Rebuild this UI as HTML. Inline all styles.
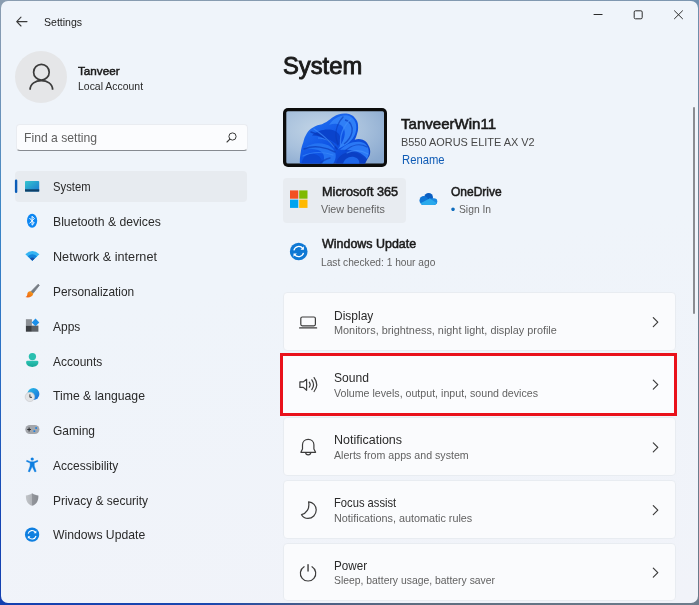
<!DOCTYPE html>
<html lang="en">
<head>
<meta charset="utf-8">
<title>Settings</title>
<style>
*{box-sizing:border-box;margin:0;padding:0}
html,body{width:699px;height:605px;overflow:hidden}
body{background:#6d7d8c;font-family:"Liberation Sans",sans-serif;color:#1b1b1b;position:relative}
#deskL{position:absolute;left:0;top:0;width:8px;height:605px;background:linear-gradient(180deg,#8a9db0 0,#7d97b5 12%,#3b86c6 35%,#2a6fc4 60%,#1546b4 85%,#1440b0 100%)}
#deskB{position:absolute;left:0;top:596px;width:699px;height:9px;background:linear-gradient(90deg,#1440b0 0,#1a48b0 30%,#4a5f86 45%,#5e6e80 60%,#6d7d8c 100%)}
#deskT{position:absolute;left:0;top:0;width:699px;height:8px;background:linear-gradient(90deg,#8a9db0 0,#7e97b0 100%)}
#deskR{position:absolute;left:690px;top:0;width:9px;height:605px;background:linear-gradient(180deg,#7090b0 0,#6d7f92 30%,#6a7a8a 100%)}
#win{position:absolute;left:1px;top:1px;width:697px;height:602px;background:linear-gradient(170deg,#eff4fa 0,#eff4fa 45%,#f1f3f9 100%);border-radius:7px;overflow:hidden}
#c{position:absolute;left:-1px;top:-1px;width:699px;height:605px;will-change:transform}
.t{position:absolute;white-space:nowrap;line-height:1;transform-origin:0 0}
.b{position:absolute}
.card{position:absolute;left:283px;width:393px;background:#fafbfd;border:1px solid #e8ecf1;border-radius:4px}
svg{position:absolute;overflow:visible}
</style>
</head>
<body>
<div id="deskT"></div><div id="deskR"></div><div id="deskL"></div><div id="deskB"></div>
<div id="win"><div id="c">

<!-- title bar -->
<svg style="left:15px;top:15px" width="14" height="14" viewBox="0 0 14 14"><path d="M6 2.200 L1.700 6.600 L6 11 M1.900 6.600 H12" fill="none" stroke="#3a3a3a" stroke-width="1.100" stroke-linecap="round" stroke-linejoin="round"/></svg>
<svg style="left:590px;top:8px" width="100" height="14" viewBox="0 0 100 14"><path d="M3.600 6.500 H12.500" stroke="#2b2b2b" stroke-width="1" fill="none"/><rect x="44.200" y="2.800" width="8" height="8" rx="1.300" fill="none" stroke="#2b2b2b" stroke-width="1"/><path d="M84.200 2.500 L92.800 11 M92.800 2.500 L84.200 11" stroke="#2b2b2b" stroke-width="1" fill="none"/></svg>

<!-- user -->
<div class="b" style="left:15px;top:50.500px;width:52px;height:52px;border-radius:50%;background:#e5e6e8"></div>
<svg style="left:27px;top:60px" width="28" height="32" viewBox="0 0 28 32"><circle cx="14.400" cy="12.200" r="7.800" fill="none" stroke="#3b3b3b" stroke-width="1.700"/><path d="M3.100 29.700 C3.100 17.500 25.600 17.500 25.600 29.700" fill="none" stroke="#3b3b3b" stroke-width="1.700"/></svg>

<!-- search -->
<div class="b" style="left:16px;top:124px;width:231.500px;height:27px;background:#fbfcfe;border:1px solid #e9ecf1;border-bottom:1px solid #868a90;border-radius:4px"></div>
<svg style="left:225px;top:131px" width="13" height="13" viewBox="0 0 13 13"><circle cx="7.500" cy="5.500" r="3.600" fill="none" stroke="#3a3a3a" stroke-width="1"/><path d="M4.900 8.100 L2 11" stroke="#3a3a3a" stroke-width="1.100" stroke-linecap="round"/></svg>

<!-- nav selection -->
<div class="b" style="left:15px;top:170.500px;width:232px;height:31px;background:#e7ebf0;border-radius:4px"></div>
<svg style="left:0;top:0" width="60" height="200" viewBox="0 0 60 200"><rect x="14.900" y="179.500" width="2.400" height="13.400" rx="1.200" fill="#0a5cb8"/></svg>

<svg style="left:0;top:0" width="699" height="605" viewBox="0 0 699 605">
<defs>
<linearGradient id="gSys" x1="0" y1="0" x2="1" y2="1"><stop offset="0" stop-color="#35c6cf"/><stop offset="1" stop-color="#1a78d2"/></linearGradient>
<linearGradient id="gAcc" x1="0" y1="0" x2="0" y2="1"><stop offset="0" stop-color="#2cc4b4"/><stop offset="1" stop-color="#16a596"/></linearGradient>
<linearGradient id="gGlobe" x1="0" y1="0" x2="1" y2="1"><stop offset="0" stop-color="#28c0e8"/><stop offset="1" stop-color="#1a6ad8"/></linearGradient>
<linearGradient id="gShield" x1="0" y1="0" x2="1" y2="0"><stop offset="0" stop-color="#c2c5c9"/><stop offset="0.5" stop-color="#b0b3b8"/><stop offset="0.5" stop-color="#92959b"/><stop offset="1" stop-color="#888b91"/></linearGradient>
<linearGradient id="gBrush" x1="1" y1="0" x2="0" y2="1"><stop offset="0" stop-color="#f6a21a"/><stop offset="1" stop-color="#ee5a12"/></linearGradient>
</defs>
<!-- system -->
<rect x="25" y="181" width="14.200" height="10.600" rx="0.800" fill="url(#gSys)"/>
<rect x="25" y="189.300" width="14.200" height="2.300" fill="#0e3f68"/>
<!-- bluetooth -->
<ellipse cx="32.100" cy="220.750" rx="5.100" ry="7.050" fill="#0c86f2"/>
<path d="M29.700 218.300 L34.300 223 L32.100 225.200 L32.100 216.300 L34.300 218.500 L29.700 223.200" fill="none" stroke="#fff" stroke-width="1" stroke-linejoin="round" stroke-linecap="round"/>
<!-- wifi -->
<path d="M32.350 260.800 L25.300 254.200 Q32.350 247.800 39.400 254.200 Z" fill="#35b4f2"/>
<path d="M32.350 260.800 L27.700 256.300 Q32.350 252.300 37 256.300 Z" fill="#1283dc"/>
<path d="M32.350 260.800 L30 258.500 Q32.350 256.500 34.700 258.500 Z" fill="#1a4fa6"/>
<!-- brush -->
<path d="M38.200 284.200 L39.300 285.300 L32.800 293.600 L30.800 291.800 Z" fill="#747a82" stroke="#747a82" stroke-width="0.800" stroke-linejoin="round"/>
<path d="M30.600 291.300 C28.600 291 27.200 292.600 27.300 294.400 C27.300 295.600 26.600 296.500 25.300 297 C28 298 32.500 297.300 33.300 293.800 Z" fill="url(#gBrush)"/>
<!-- apps -->
<rect x="25.900" y="319.200" width="6" height="6.400" fill="#8c9095"/>
<rect x="25.900" y="325.600" width="6" height="6.100" fill="#3a3d41"/>
<rect x="31.900" y="325.600" width="6.500" height="6.100" fill="#5d6166"/>
<path d="M35.500 318.600 L39.300 322.400 L35.500 326.200 L31.700 322.400 Z" fill="#1b8fea"/>
<!-- accounts -->
<circle cx="32.400" cy="356.600" r="3.650" fill="#2abfb0"/>
<path d="M27.600 360.700 H37 Q38.400 360.700 38.400 362.100 C38.400 368.600 26.100 368.600 26.100 362.100 Q26.100 360.700 27.600 360.700 Z" fill="url(#gAcc)"/>
<!-- time -->
<circle cx="33.400" cy="393.900" r="6" fill="url(#gGlobe)"/>
<circle cx="29.900" cy="396.900" r="4.700" fill="#e3e4e6"/>
<circle cx="29.900" cy="396.900" r="4.700" fill="none" stroke="#c4c6ca" stroke-width="0.600"/>
<path d="M29.900 394.300 V397.300 H32" fill="none" stroke="#2b2b2b" stroke-width="0.900"/>
<!-- gaming -->
<rect x="25.300" y="424.900" width="14.100" height="9.200" rx="4.600" fill="#a3a6ab"/>
<path d="M27.200 429.500 H31 M29.100 427.600 V431.400" stroke="#2e3033" stroke-width="1.100" fill="none"/>
<rect x="35.300" y="427.200" width="1.700" height="1.700" fill="#1b7fe0"/>
<rect x="33.500" y="430.300" width="1.700" height="1.700" fill="#1b7fe0"/>
<!-- accessibility -->
<circle cx="32.200" cy="459" r="1.600" fill="#0f7fe0"/>
<path d="M26.800 460.300 L30.600 461.700 H33.800 L37.600 460.300 L38 461.400 L34.300 463 L34.300 466 L36.200 471.400 L34.800 471.900 L32.200 466.600 L29.600 471.900 L28.200 471.400 L30.100 466 L30.100 463 L26.400 461.400 Z" fill="#0f7fe0" stroke="#0f7fe0" stroke-width="0.400" stroke-linejoin="round"/>
<!-- shield -->
<path d="M32.150 493.300 C34.200 494.800 36.300 495.300 38.400 495.400 C38.600 500.500 36.800 504 32.150 505.800 C27.500 504 25.700 500.500 25.900 495.400 C28 495.300 30.100 494.800 32.150 493.300 Z" fill="url(#gShield)"/>
<!-- windows update -->
<circle cx="32.100" cy="534.650" r="7.150" fill="#0f7fe0"/>
<path d="M28.200 533.700 A4 4 0 0 1 35.400 532.300" fill="none" stroke="#fff" stroke-width="1.100"/>
<path d="M36 536 A4 4 0 0 1 28.800 537.200" fill="none" stroke="#fff" stroke-width="1.100"/>
<path d="M36.300 530.600 V533.200 H33.700 Z" fill="#fff"/>
<path d="M27.900 538.800 V536.200 H30.500 Z" fill="#fff"/>
</svg>


<!-- device -->
<div class="b" style="left:283px;top:108px;width:104px;height:58.500px;background:#0c0c0c;border-radius:5px"></div>
<svg style="left:0;top:0" width="699" height="605" viewBox="0 0 699 605">
<defs>
<radialGradient id="wbg" cx="0.35" cy="0.35" r="0.8"><stop offset="0" stop-color="#c3d5e6"/><stop offset="0.55" stop-color="#a7c0dc"/><stop offset="1" stop-color="#8aa9cf"/></radialGradient>
<linearGradient id="bl1" x1="0" y1="0" x2="1" y2="1"><stop offset="0" stop-color="#2a7af5"/><stop offset="0.5" stop-color="#0f55e6"/><stop offset="1" stop-color="#0a3cc0"/></linearGradient>
<linearGradient id="bl2" x1="0" y1="0" x2="0" y2="1"><stop offset="0" stop-color="#2f80f8"/><stop offset="1" stop-color="#0b45cf"/></linearGradient>
<clipPath id="wclip"><rect x="286.300" y="111.200" width="97.700" height="52.300" rx="1.500"/></clipPath>
</defs>
<g clip-path="url(#wclip)">
<rect x="286" y="111" width="99" height="53" fill="url(#wbg)"/>
<!-- bloom -->
<path d="M300 165 C299.500 160 300.200 155 300.800 152 C301.300 148 302.200 145 303.300 142.200 C304 139 305 136.500 306.500 134 C308 131 310 129 313 127.500 C316 125.500 319 124.800 322 124.200 C325 123 328 121 330.200 119.300 C332.500 117 335.500 115.300 338.400 114.400 C341 113.500 344 113.300 346.500 113.600 C350 114 353 115.500 354.700 117.700 C357 120 358.200 123 358 125.800 C358.300 129 358 131.500 357 134 C356.500 136 355.700 138 354.700 139.700 C357 138.600 360 138.600 362.800 139.700 C365.500 140.800 367.500 143 368.500 145.400 C369.800 147.500 370.300 150 370.200 152 C370.200 154.500 369.200 156.500 367.700 158.500 C366.800 160.500 365.800 162 364.500 165 Z" fill="url(#bl1)"/>
<path d="M329 125 C333 118 342 114 348 115.500 C355 117.500 358 125 355.500 133 C353 141 345 146 338 149 C344 141 347 133 343 127 C340 123 334 123 329 125 Z" fill="#2f7ff7"/>
<path d="M312 135.500 C318 130 328 128 335 131 C341 134 342 140 338 146 C333 140 323 136 312 135.500 Z" fill="#0a43cc"/>
<path d="M305 148 C312 142 324 142 331 147 C337 151.500 337 158 333 164 L322 164 C326 158 324 152 318 150 C313 148.500 308 149 305 148 Z" fill="#2473f2"/>
<path d="M301.500 164 C302 157 308 153 314 154 C320 155 323 160 321 164 Z" fill="#0c48d2"/>
<path d="M340 150 C346 143 357 139.500 364 143 C369 146 370.500 153 367 159 C362 152 352 149 340 150 Z" fill="#2a78f5"/>
<path d="M336 164 C337 157 343 152 351 152 C359 152 365 157 365 164 Z" fill="#0a3fc4"/>
<path d="M343 164 C344 159 349 156 354 157 C358 158 360 161 359 164 Z" fill="#1d66ea"/>
<path d="M345 120 C350 121 353 126 352 132 C351 137 348 141 344 144" fill="none" stroke="#0a3dc0" stroke-width="1.300" opacity="0.700"/>
<path d="M318 138 C324 138 331 141 335 146" fill="none" stroke="#3a8bfb" stroke-width="1" opacity="0.800"/>
<g fill="none" stroke-linecap="round">
<path d="M337 149 C331 141 322 135 311 132" stroke="#0a3ab8" stroke-width="1.600" opacity="0.750"/>
<path d="M334 147 C328 139 320 133 314 129" stroke="#3f8dfb" stroke-width="1.200" opacity="0.700"/>
<path d="M335 152 C326 147 314 145 304 149" stroke="#0a3ab8" stroke-width="1.500" opacity="0.700"/>
<path d="M333 155 C325 152 313 151 303 156" stroke="#3f8dfb" stroke-width="1.200" opacity="0.600"/>
<path d="M341 146 C339 137 343 126 351 119" stroke="#3f8dfb" stroke-width="1.300" opacity="0.700"/>
<path d="M338 144 C334 135 336 125 343 117" stroke="#0a3ab8" stroke-width="1.400" opacity="0.600"/>
<path d="M346 150 C352 145 360 143 367 147" stroke="#0a3ab8" stroke-width="1.400" opacity="0.600"/>
<path d="M347 153 C353 150 361 150 368 154" stroke="#4a95fc" stroke-width="1.100" opacity="0.600"/>
<path d="M330 158 C326 159 322 161 320 164" stroke="#0a3ab8" stroke-width="1.400" opacity="0.600"/>
</g>
</g>
</svg>

<!-- tiles -->
<div class="b" style="left:283px;top:177.500px;width:122.500px;height:45px;background:#e8ecf1;border-radius:4px"></div>
<svg style="left:0;top:0" width="699" height="605" viewBox="0 0 699 605">
<!-- ms logo -->
<rect x="290" y="190.400" width="8.300" height="8.300" fill="#f25022"/>
<rect x="299.200" y="190.400" width="8.300" height="8.300" fill="#7fba00"/>
<rect x="290" y="199.600" width="8.300" height="8.300" fill="#00a4ef"/>
<rect x="299.200" y="199.600" width="8.300" height="8.300" fill="#ffb900"/>
<!-- onedrive -->
<circle cx="428.600" cy="197.400" r="4.400" fill="#0a5ec2"/>
<circle cx="423.800" cy="200.400" r="4.300" fill="#0f76d6"/>
<circle cx="433.900" cy="201.600" r="3.300" fill="#1a8ae2"/>
<path d="M421.800 204.900 H434.200 A3.300 3.300 0 0 0 436.300 199.300 L429.800 198.300 L421 203.700 Z" fill="#1a8ae2"/>
<path d="M420.500 203.200 L429.700 198.400 L436.700 203 A3.300 3.300 0 0 1 434 204.900 H423 A4.300 4.300 0 0 1 420.500 203.200 Z" fill="#29a9ec"/>
<!-- windows update -->
<circle cx="298.700" cy="251.500" r="8.800" fill="#0f78d4"/>
<path d="M293.900 250.300 A5 5 0 0 1 302.800 248.500" fill="none" stroke="#fff" stroke-width="1.300"/>
<path d="M303.500 252.900 A5 5 0 0 1 294.600 254.600" fill="none" stroke="#fff" stroke-width="1.300"/>
<path d="M303.900 246.300 V249.700 H300.500 Z" fill="#fff"/>
<path d="M293.500 256.800 V253.400 H296.900 Z" fill="#fff"/>
</svg>


<!-- cards -->
<div class="card" style="top:292px;height:59px"></div>
<div class="card" style="top:417px;height:59px"></div>
<div class="card" style="top:480px;height:59px"></div>
<div class="card" style="top:543px;height:58px"></div>
<div class="b" style="left:280px;top:353px;width:397px;height:63px;border:3px solid #e9111b;background:#fbfcfe"></div>
<svg style="left:0;top:0" width="699" height="605" viewBox="0 0 699 605" fill="none" stroke="#3c3c3c" stroke-width="1.200" stroke-linecap="round" stroke-linejoin="round">
<rect x="300.800" y="317" width="14.600" height="8.800" rx="1.500"/>
<path d="M299.600 327.900 H316.600"/>
<path d="M299.900 381.900 H303.300 L306.600 379.300 V390.300 L303.300 387.400 H299.900 Z"/>
<path d="M309.300 382.200 Q311.100 384.700 309.300 387.200"/>
<path d="M311.800 379.800 Q315.200 384.700 311.800 389.600"/>
<path d="M314.100 377.600 Q319.300 384.700 314.100 391.500"/>
<path d="M302.500 449 V444.800 C302.500 441.500 305 439.300 308.200 439.300 C311.400 439.300 313.900 441.500 313.900 444.800 V449 L315.600 452.300 H300.900 Z"/>
<path d="M305.600 452.500 C305.800 455.600 310.600 455.600 310.800 452.500"/>
<path d="M308.600 501.800 C313 502.200 316.200 505.700 316.200 510 C316.200 514.700 312.500 518.400 308 518.400 C305.200 518.400 302.800 517 301.500 514.700 C306.300 513.400 309.900 508.800 308.600 501.800 Z"/>
<path d="M312.02 566.70 A7.7 7.7 0 1 1 304.08 566.70"/>
<path d="M308.050 564.700 V571" stroke-width="1.400"/>
<path d="M653.300 317.6 L657.800 322.1 L653.300 326.6"/>
<path d="M653.300 380.2 L657.800 384.7 L653.300 389.2"/>
<path d="M653.300 442.9 L657.800 447.4 L653.300 451.9"/>
<path d="M653.300 505.6 L657.800 510.1 L653.300 514.6"/>
<path d="M653.300 568.2 L657.800 572.7 L653.300 577.2"/>
</svg>

<!-- scrollbar -->
<div class="b" style="left:693px;top:107px;width:2px;height:207px;background:#8a8c92;border-radius:1px"></div>

<span class="t" style="left:44.00px;top:18.00px;font-size:10.2px;font-weight:normal;color:#222;transform:scaleX(1.0350)">Settings</span>
<span class="t" style="left:77.75px;top:66.00px;font-size:11.8px;font-weight:normal;color:#1a1a1a;transform:scaleX(0.9897);-webkit-text-stroke:0.5px #1a1a1a">Tanveer</span>
<span class="t" style="left:77.50px;top:82.00px;font-size:10.3px;font-weight:normal;color:#2a2a2a;transform:scaleX(1.0151)">Local Account</span>
<span class="t" style="left:24.00px;top:133.00px;font-size:11.9px;font-weight:normal;color:#5f5f5f;transform:scaleX(1.0230)">Find a setting</span>
<span class="t" style="left:53.15px;top:182.00px;font-size:11.9px;font-weight:normal;color:#2a2a2a;transform:scaleX(0.9462)">System</span>
<span class="t" style="left:53.15px;top:217.00px;font-size:11.9px;font-weight:normal;color:#2a2a2a;transform:scaleX(1.0256)">Bluetooth &amp; devices</span>
<span class="t" style="left:53.15px;top:252.00px;font-size:11.9px;font-weight:normal;color:#2a2a2a;transform:scaleX(1.0624)">Network &amp; internet</span>
<span class="t" style="left:53.15px;top:287.00px;font-size:11.9px;font-weight:normal;color:#2a2a2a;transform:scaleX(0.9989)">Personalization</span>
<span class="t" style="left:52.65px;top:322.00px;font-size:11.9px;font-weight:normal;color:#2a2a2a;transform:scaleX(1.0071)">Apps</span>
<span class="t" style="left:52.65px;top:357.00px;font-size:11.9px;font-weight:normal;color:#2a2a2a;transform:scaleX(1.0079)">Accounts</span>
<span class="t" style="left:52.90px;top:391.00px;font-size:11.9px;font-weight:normal;color:#2a2a2a;transform:scaleX(1.0279)">Time &amp; language</span>
<span class="t" style="left:52.90px;top:426.00px;font-size:11.9px;font-weight:normal;color:#2a2a2a;transform:scaleX(1.0080)">Gaming</span>
<span class="t" style="left:52.65px;top:461.00px;font-size:11.9px;font-weight:normal;color:#2a2a2a;transform:scaleX(1.0084)">Accessibility</span>
<span class="t" style="left:52.65px;top:496.00px;font-size:11.9px;font-weight:normal;color:#2a2a2a;transform:scaleX(1.0059)">Privacy &amp; security</span>
<span class="t" style="left:52.65px;top:530.00px;font-size:11.9px;font-weight:normal;color:#2a2a2a;transform:scaleX(1.0258)">Windows Update</span>
<span class="t" style="left:282.64px;top:55.00px;font-size:23.4px;font-weight:normal;color:#1a1a1a;transform:scaleX(1.0151);-webkit-text-stroke:0.9px #1a1a1a">System</span>
<span class="t" style="left:401.20px;top:116.00px;font-size:15px;font-weight:normal;color:#1a1a1a;transform:scaleX(1.0034);-webkit-text-stroke:0.6px #1a1a1a">TanveerWin11</span>
<span class="t" style="left:401.15px;top:137.00px;font-size:11.5px;font-weight:normal;color:#484848;transform:scaleX(0.9502)">B550 AORUS ELITE AX V2</span>
<span class="t" style="left:401.90px;top:155.00px;font-size:11.9px;font-weight:normal;color:#0f5bb5;transform:scaleX(0.9464)">Rename</span>
<span class="t" style="left:321.87px;top:187.00px;font-size:11.9px;font-weight:normal;color:#1a1a1a;transform:scaleX(1.0670);-webkit-text-stroke:0.5px #1a1a1a">Microsoft 365</span>
<span class="t" style="left:320.65px;top:205.00px;font-size:10.3px;font-weight:normal;color:#626262;transform:scaleX(1.0442)">View benefits</span>
<span class="t" style="left:450.90px;top:187.00px;font-size:11.9px;font-weight:normal;color:#1a1a1a;transform:scaleX(1.0096);-webkit-text-stroke:0.5px #1a1a1a">OneDrive</span>
<span class="t" style="left:458.90px;top:205.00px;font-size:10.3px;font-weight:normal;color:#626262;transform:scaleX(1.0006)">Sign In</span>
<span class="t" style="left:321.86px;top:239.00px;font-size:11.9px;font-weight:normal;color:#1a1a1a;transform:scaleX(1.0477);-webkit-text-stroke:0.5px #1a1a1a">Windows Update</span>
<span class="t" style="left:321.15px;top:258.00px;font-size:10.3px;font-weight:normal;color:#626262;transform:scaleX(0.9887)">Last checked: 1 hour ago</span>
<span class="t" style="left:333.65px;top:311.00px;font-size:11.9px;font-weight:normal;color:#2a2a2a;transform:scaleX(1.0079)">Display</span>
<span class="t" style="left:333.90px;top:326.00px;font-size:10.3px;font-weight:normal;color:#626262;transform:scaleX(1.0550)">Monitors, brightness, night light, display profile</span>
<span class="t" style="left:333.90px;top:373.00px;font-size:11.9px;font-weight:normal;color:#2a2a2a;transform:scaleX(1.0172)">Sound</span>
<span class="t" style="left:333.90px;top:389.00px;font-size:10.3px;font-weight:normal;color:#626262;transform:scaleX(1.0330)">Volume levels, output, input, sound devices</span>
<span class="t" style="left:333.90px;top:435.00px;font-size:11.9px;font-weight:normal;color:#2a2a2a;transform:scaleX(1.0506)">Notifications</span>
<span class="t" style="left:333.90px;top:451.00px;font-size:10.3px;font-weight:normal;color:#626262;transform:scaleX(1.0323)">Alerts from apps and system</span>
<span class="t" style="left:333.90px;top:498.00px;font-size:11.9px;font-weight:normal;color:#2a2a2a;transform:scaleX(0.9412)">Focus assist</span>
<span class="t" style="left:333.90px;top:514.00px;font-size:10.3px;font-weight:normal;color:#626262;transform:scaleX(1.0504)">Notifications, automatic rules</span>
<span class="t" style="left:333.90px;top:561.00px;font-size:11.9px;font-weight:normal;color:#2a2a2a;transform:scaleX(0.9809)">Power</span>
<span class="t" style="left:333.90px;top:576.00px;font-size:10.3px;font-weight:normal;color:#626262;transform:scaleX(1.0083)">Sleep, battery usage, battery saver</span>
<span class="t" style="left:450.800px;top:202.800px;font-size:13px;color:#0f6cbd">•</span>
</div></div>
</body>
</html>
